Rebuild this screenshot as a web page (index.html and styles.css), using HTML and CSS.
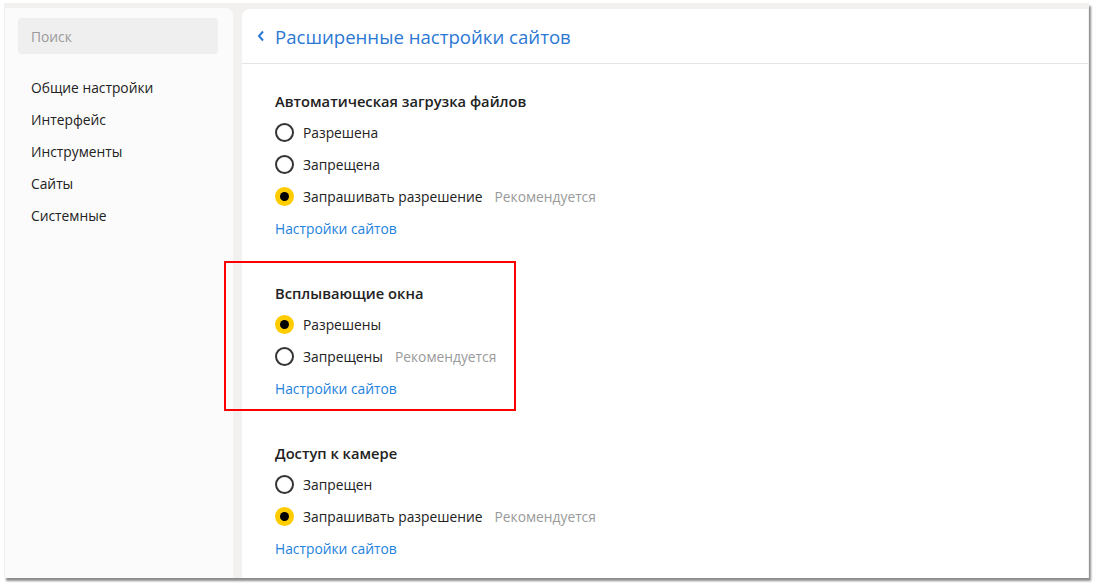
FILE: index.html
```html
<!DOCTYPE html>
<html lang="ru">
<head>
<meta charset="utf-8">
<title>Настройки</title>
<link rel="stylesheet" href="styles.css">
</head>
<body>
<div class="window">
  <aside class="sidebar">
    <div class="search">Поиск</div>
    <nav class="nav">
      <div class="nav-item">Общие настройки</div>
      <div class="nav-item">Интерфейс</div>
      <div class="nav-item">Инструменты</div>
      <div class="nav-item">Сайты</div>
      <div class="nav-item">Системные</div>
    </nav>
  </aside>
  <main class="main">
    <header class="header">
      <svg class="chev" width="8" height="12" viewBox="0 0 8 12"><path d="M6 1.5 L2 6 L6 10.5" fill="none" stroke="#2b78d4" stroke-width="2"/></svg>
      <span class="title">Расширенные настройки сайтов</span>
    </header>
    <div class="content">
      <section class="section">
        <div class="sec-title">Автоматическая загрузка файлов</div>
        <div class="row"><span class="radio"></span><span class="label">Разрешена</span></div>
        <div class="row"><span class="radio"></span><span class="label">Запрещена</span></div>
        <div class="row"><span class="radio on"></span><span class="label">Запрашивать разрешение</span><span class="rec">Рекомендуется</span></div>
        <div class="row"><span class="link">Настройки сайтов</span></div>
      </section>
      <section class="section">
        <div class="sec-title">Всплывающие окна</div>
        <div class="row"><span class="radio on"></span><span class="label">Разрешены</span></div>
        <div class="row"><span class="radio"></span><span class="label">Запрещены</span><span class="rec">Рекомендуется</span></div>
        <div class="row"><span class="link">Настройки сайтов</span></div>
      </section>
      <section class="section">
        <div class="sec-title">Доступ к камере</div>
        <div class="row"><span class="radio"></span><span class="label">Запрещен</span></div>
        <div class="row"><span class="radio on"></span><span class="label">Запрашивать разрешение</span><span class="rec">Рекомендуется</span></div>
        <div class="row"><span class="link">Настройки сайтов</span></div>
      </section>
    </div>
  </main>
</div>
<div class="highlight"></div>
</body>
</html>
```
FILE: styles.css
```css
html, body {
  margin: 0;
  padding: 0;
  background: #ffffff;
}
body {
  font-family: "Open Sans", "Noto Sans", sans-serif;
  font-size: 13.8px;
  color: #222222;
  width: 1097px;
  height: 587px;
  overflow: hidden;
  position: relative;
}
.window {
  margin: 3px 0 0 4px;
  width: 1085px;
  height: 575px;
  box-sizing: border-box;
  background: #f2f1f0;
  padding: 5px 1px 0 1px;
  display: flex;
  gap: 9px;
  box-shadow: 2px 3px 2px rgba(0, 0, 0, 0.45);
}
.sidebar {
  width: 228px;
  flex: none;
  background: #fbfbfb;
  border-top-right-radius: 8px;
  padding: 10px 15px 0 13px;
  box-sizing: border-box;
}
.search {
  height: 36px;
  background: #efefef;
  border-radius: 4px;
  color: #9a9a9a;
  display: flex;
  align-items: center;
  padding-left: 13px;
}
.nav {
  margin-top: 18px;
  padding-left: 13px;
}
.nav-item {
  height: 32px;
  line-height: 32px;
}
.main {
  flex: 1;
  background: #ffffff;
  border-top-left-radius: 8px;
  margin-top: 1px;
}
.header {
  height: 54px;
  border-bottom: 1px solid #e4e4e4;
  display: flex;
  align-items: center;
  padding-left: 15px;
}
.chev {
  margin-right: 10px;
}
.title {
  font-size: 18.6px;
  color: #2b78d4;
}
.content {
  padding: 25px 0 0 33px;
}
.section {
  margin-bottom: 37px;
}
.sec-title {
  height: 24px;
  line-height: 24px;
  font-size: 14.7px;
  font-weight: 600;
  margin-bottom: 3px;
}
.row {
  height: 32px;
  display: flex;
  align-items: center;
}
.radio {
  width: 19px;
  height: 19px;
  box-sizing: border-box;
  border: 2px solid #333333;
  border-radius: 50%;
  margin-right: 9px;
  flex: none;
}
.radio.on {
  border: none;
  background: #ffcc00;
  display: flex;
  align-items: center;
  justify-content: center;
}
.radio.on::after {
  content: "";
  width: 9px;
  height: 9px;
  border-radius: 50%;
  background: #000000;
}
.rec {
  color: #9a9a9a;
  margin-left: 12px;
}
.link {
  color: #1e82de;
}
.highlight {
  position: absolute;
  left: 224px;
  top: 261px;
  width: 292px;
  height: 150px;
  box-sizing: border-box;
  border: 2px solid #ff0000;
}
```
